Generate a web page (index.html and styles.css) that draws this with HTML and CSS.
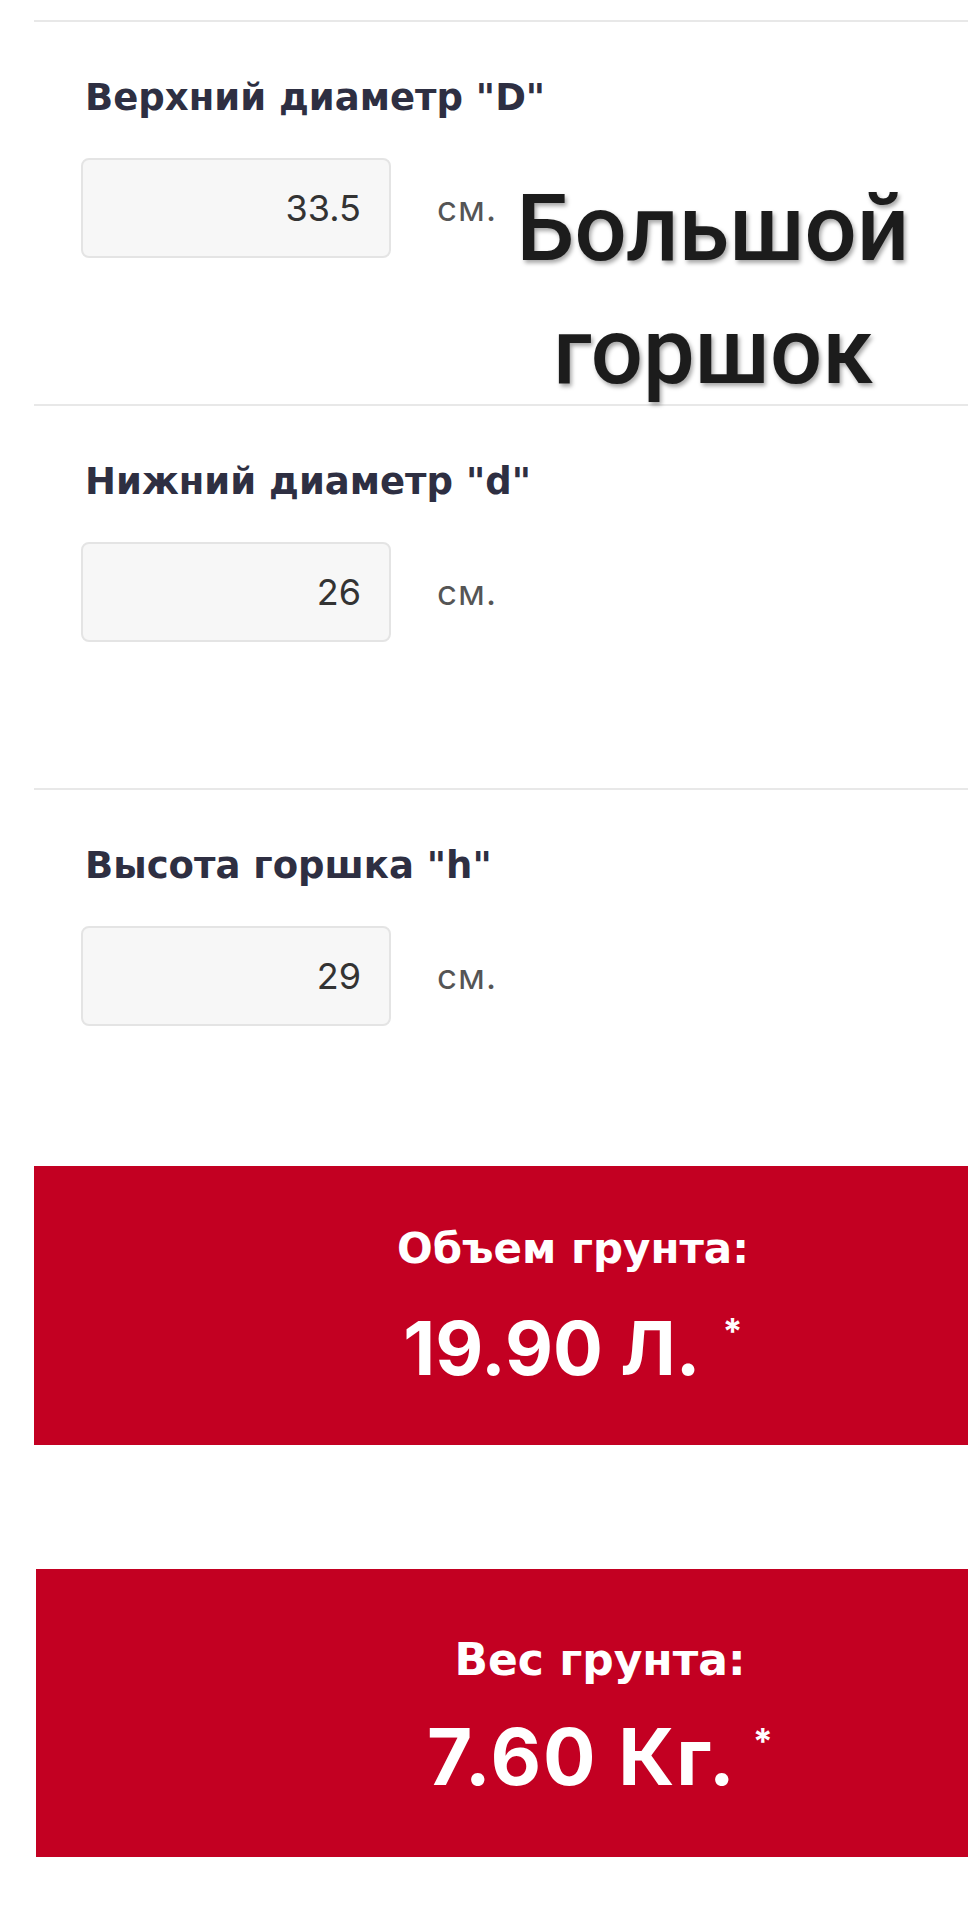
FILE: index.html
```html
<!DOCTYPE html>
<html>
<head>
  <meta charset="utf-8">
  <title>Калькулятор грунта</title>
  <link rel="stylesheet" href="styles.css">
</head>
<body>
  <div class="calc">
    <div class="field">
      <div class="field-label">Верхний диаметр "D"</div>
      <div class="field-row">
        <input type="text" class="field-input" id="top_d" value="33.5">
        <span class="unit">см.</span>
      </div>
    </div>

    <div class="field">
      <div class="field-label">Нижний диаметр "d"</div>
      <div class="field-row">
        <input type="text" class="field-input" id="bottom_d" value="26">
        <span class="unit">см.</span>
      </div>
    </div>

    <div class="field field-last">
      <div class="field-label">Высота горшка "h"</div>
      <div class="field-row">
        <input type="text" class="field-input" id="height_h" value="29">
        <span class="unit">см.</span>
      </div>
    </div>

    <div class="result result-volume">
      <div class="result-title">Объем грунта:</div>
      <div class="result-value">19.90 Л.<span class="star">*</span></div>
    </div>

    <div class="result result-weight">
      <div class="result-title">Вес грунта:</div>
      <div class="result-value">7.60 Кг.<span class="star">*</span></div>
    </div>
  </div>

  <div class="caption">Большой<br>горшок</div>
</body>
</html>
```

FILE: styles.css
```css
body {
  margin: 0;
  background-color: #fff;
  font-family: Inter, "Noto Sans", sans-serif;
}
.calc {
  padding: 20px 0 0 34px;
}
.field {
  border-top: 2px solid #e8e8e8;
  padding: 54px 0 146px 47px;
}
.field-last {
  padding-bottom: 140px;
}
.field-label {
  margin-left: 4px;
  font-family: "DejaVu Sans", sans-serif;
  font-weight: bold;
  font-size: 37px;
  line-height: 44px;
  color: #2e2f42;
}
.field-row {
  display: flex;
  align-items: baseline;
  margin-top: 38px;
}
.field-input {
  box-sizing: border-box;
  width: 310px;
  height: 100px;
  padding: 0 28px 0 10px;
  border: 2px solid #e4e4e4;
  border-radius: 8px;
  background-color: #f7f7f7;
  font-family: Inter, sans-serif;
  font-size: 36px;
  color: #333;
  text-align: right;
}
.unit {
  margin-left: 46px;
  font-size: 35px;
  letter-spacing: 1px;
  color: #555;
}
.result {
  background-color: #c30022;
  color: #fff;
  text-align: center;
  padding: 58px 0 57px 144px;
}
.result-weight {
  margin-top: 124px;
  margin-left: 2px;
  padding: 66px 0 60px 196px;
}
.result-title {
  font-family: "DejaVu Sans", sans-serif;
  font-weight: bold;
  font-size: 42px;
  line-height: 50px;
}
.result-value {
  margin-top: 34px;
  font-weight: bold;
  font-size: 74px;
  line-height: 80px;
}
.result-weight .result-title {
  font-size: 44px;
}
.result-weight .result-value {
  margin-top: 32px;
  font-size: 78px;
  letter-spacing: 2px;
}
.star {
  margin-left: 22px;
  font-size: 36px;
  line-height: 1;
  letter-spacing: 0;
  vertical-align: 31px;
}
.result-weight .star {
  margin-left: 16px;
}
.caption {
  position: absolute;
  top: 167px;
  left: 493px;
  width: 440px;
  text-align: center;
  font-family: Roboto, sans-serif;
  font-weight: 500;
  font-size: 92px;
  line-height: 123px;
  color: #1c1c1c;
  text-shadow: 2px 3px 4px rgba(0, 0, 0, 0.35);
}
```
